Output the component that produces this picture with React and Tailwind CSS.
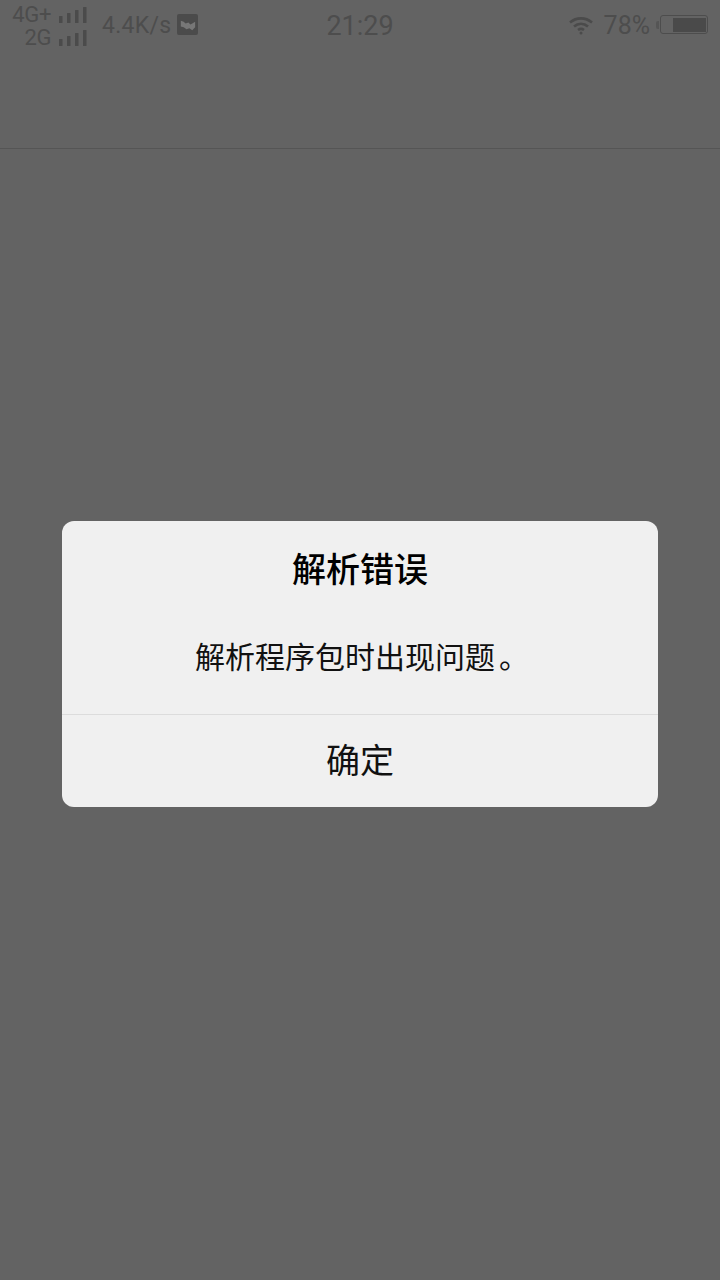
const cjk = { fontFamily: '"Noto Sans CJK SC", sans-serif' }

function SignalBars({ className }) {
  return (
    <svg viewBox="0 0 28 16" className={className} fill="#4b4b4b">
      <rect x="0" y="9" width="3.500" height="7" rx="0.5" />
      <rect x="8" y="6" width="3.500" height="10" rx="0.5" />
      <rect x="16" y="3" width="3.500" height="13" rx="0.5" />
      <rect x="24" y="0" width="3.500" height="16" rx="0.5" />
    </svg>
  )
}

function StatusBar() {
  return (
    <div className="flex h-[50px] items-start justify-between font-['Roboto',sans-serif] text-[#4d4d4d]">
      <div className="flex w-[200px] items-start pl-[10px] pt-[6px]">
        <div className="flex w-[77px] flex-col items-end">
          <div className="flex h-[18px] items-center gap-[8px]">
            <span className="text-[22px] leading-none tracking-[-0.4px]">4G+</span>
            <SignalBars className="h-[16px] w-[28px]" />
          </div>
          <div className="mt-[5px] flex h-[18px] items-center gap-[8px]">
            <span className="text-[22px] leading-none tracking-[-0.4px]">2G</span>
            <SignalBars className="h-[16px] w-[28px]" />
          </div>
        </div>
        <span className="ml-[15px] mt-[8px] text-[23px] leading-none tracking-[0.3px]">4.4K/s</span>
        <svg viewBox="0 0 22 22" className="ml-[5px] mt-[8px] h-[21px] w-[21px]">
          <rect width="22" height="22" rx="2" fill="#4b4b4b" />
          <path d="M4 7l3 1 2 2 3-1 2 2 2-1 3-2v6l-3 3-3-2-3 1-3-2-3-1z" fill="#777777" />
        </svg>
      </div>
      <span className="mt-[13px] text-[27px] leading-none">21:29</span>
      <div className="flex w-[200px] items-start justify-end pr-[12px] pt-[13px]">
        <svg viewBox="0 0 24 20" className="mt-[2px] h-[20px] w-[24px]" fill="none" stroke="#4b4b4b" strokeWidth="2.6">
          <path d="M1 7.5c6.500-5.500 15.500-5.500 22 0" />
          <path d="M5 11.500c4.200-3.500 9.800-3.500 14 0" />
          <path d="M9 15c1.800-1.300 4.200-1.300 6 0" />
          <circle cx="12" cy="18" r="1.500" fill="#4b4b4b" stroke="none" />
        </svg>
        <span className="ml-[11px] text-[25px] leading-none">78%</span>
        <div className="ml-[6px] mt-[8px] h-[8px] w-[3px] rounded-l-[2px] bg-[#555555]" />
        <div className="ml-px mt-[2px] flex h-[19px] w-[48px] items-center justify-end rounded-[3px] border border-[#4d4d4d] p-[1px]">
          <div className="h-[14px] w-[33px] bg-[#4a4a4a]" />
        </div>
      </div>
    </div>
  )
}

export default function App() {
  return (
    <div className="flex h-[1280px] w-[720px] flex-col overflow-hidden bg-[#636363]">
      <div className="h-[149px] border-b border-[#555555]">
        <StatusBar />
      </div>
      <div className="pl-[62px] pt-[372px]">
        <div className="h-[286px] w-[596px] overflow-hidden rounded-[12px] bg-[#f0f0f0] text-center text-black" style={cjk}>
          <div className="flex h-[194px] flex-col items-center border-b border-[#dcdcdc]">
            <h1 className="mt-[23px] h-[48px] text-[34px] font-medium leading-[48px]">解析错误</h1>
            <p className="mt-[41px] pl-[4px] text-[30px] leading-[44px] text-[#111111]">
              解析程序包时出现问<span className="tracking-[4px]">题</span>。
            </p>
          </div>
          <button type="button" className="h-[92px] w-full pb-[6px] text-[34px] text-[#111111]">确定</button>
        </div>
      </div>
    </div>
  )
}
